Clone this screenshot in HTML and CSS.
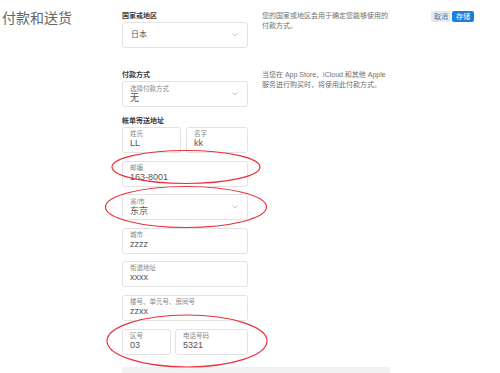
FILE: index.html
```html
<!DOCTYPE html>
<html lang="zh-CN">
<head>
    <meta charset="UTF-8">
    <meta name="viewport" content="width=device-width, initial-scale=1.0">
    <link rel="stylesheet" href="styles.css">
</head>
<body>
<div class="page">
    <h1 class="title">付款和送货</h1>

    <div class="form">
        <div class="section first">
            <div class="fields">
                <label class="group-label">国家或地区</label>
                <div class="box select single">
                    <span class="value big">日本</span>
                    <svg class="chevron" width="6" height="4" viewBox="0 0 6 4"><polyline points="0.5,0.5 3,3 5.5,0.5" fill="none" stroke="#b5b5b5" stroke-width="0.8"/></svg>
                </div>
            </div>
            <p class="note">您的国家或地区会用于确定您能够使用的<br>付款方式。</p>
        </div>

        <div class="section second">
            <div class="fields">
                <label class="group-label">付款方式</label>
                <div class="box select payment">
                    <div>
                        <span class="hint">选择付款方式</span>
                        <span class="value">无</span>
                    </div>
                    <svg class="chevron" width="6" height="4" viewBox="0 0 6 4"><polyline points="0.5,0.5 3,3 5.5,0.5" fill="none" stroke="#b5b5b5" stroke-width="0.8"/></svg>
                </div>
            </div>
            <p class="note">当您在 App Store、iCloud 和其他 Apple<br>服务进行购买时，将使用此付款方式。</p>
        </div>

        <div class="section third">
            <div class="fields">
                <label class="group-label">帐单寄送地址</label>
                <div class="stack">
                    <div class="pair name">
                        <div class="box"><span class="hint">姓氏</span><span class="value">LL</span></div>
                        <div class="box"><span class="hint">名字</span><span class="value">kk</span></div>
                    </div>
                    <div class="box"><span class="hint">邮编</span><span class="value">163-8001</span></div>
                    <div class="box select">
                        <div>
                            <span class="hint">省/市</span>
                            <span class="value">东京</span>
                        </div>
                        <svg class="chevron" width="6" height="4" viewBox="0 0 6 4"><polyline points="0.5,0.5 3,3 5.5,0.5" fill="none" stroke="#b5b5b5" stroke-width="0.8"/></svg>
                    </div>
                    <div class="box"><span class="hint">城市</span><span class="value">zzzz</span></div>
                    <div class="box"><span class="hint">街道地址</span><span class="value">xxxx</span></div>
                    <div class="box"><span class="hint">楼号、单元号、房间号</span><span class="value">zzxx</span></div>
                    <div class="pair phone">
                        <div class="box"><span class="hint">区号</span><span class="value">03</span></div>
                        <div class="box"><span class="hint">电话号码</span><span class="value">5321</span></div>
                    </div>
                </div>
            </div>
        </div>

        <div class="footer-bar"></div>
    </div>

    <div class="actions">
        <button class="btn cancel">取消</button>
        <button class="btn save">存储</button>
    </div>
</div>

<!-- red marks drawn over the form -->
<svg class="marks" width="500" height="373" viewBox="0 0 500 373">
    <ellipse cx="186" cy="167" rx="74" ry="16.5" fill="none" stroke="#e8323c" stroke-width="1.2"/>
    <ellipse cx="186" cy="207" rx="80.5" ry="20.5" fill="none" stroke="#e8323c" stroke-width="1.2"/>
    <ellipse cx="187" cy="341" rx="80" ry="26" fill="none" stroke="#e8323c" stroke-width="1.2"/>
</svg>
</body>
</html>
```

FILE: styles.css
```css
body {
    margin: 0;
    font-family: "Liberation Sans", "Noto Sans CJK SC", sans-serif;
    background-color: #FFFFFF;
    color: #333;
    position: relative;
    height: 373px;
    overflow: hidden;
}

.page {
    display: flex;
    align-items: flex-start;
    padding: 0 26px 0 2px;
}

.title {
    width: 120px;
    flex-shrink: 0;
    margin: 9px 0 0;
    font-size: 14px;
    line-height: 18px;
    font-weight: normal;
    color: #666;
}

.form {
    width: 268px;
    display: flex;
    flex-direction: column;
}

.section {
    display: grid;
    grid-template-columns: 126px 128px;
    column-gap: 14px;
}

.section.first {
    margin-top: 11px;
}

.section.second {
    margin-top: 22px;
}

.section.third {
    margin-top: 9px;
}

.group-label {
    display: block;
    font-size: 7px;
    line-height: 9px;
    font-weight: bold;
    color: #3a3a3a;
    margin-bottom: 2px;
}

.note {
    margin: 0;
    font-size: 7px;
    line-height: 10px;
    color: #707070;
}

.stack {
    display: flex;
    flex-direction: column;
    gap: 7.6px;
}

.pair {
    display: grid;
}

.pair.name {
    grid-template-columns: 59px 1fr;
    column-gap: 5px;
}

.pair.phone {
    grid-template-columns: 49px 1fr;
    column-gap: 4px;
}

.box {
    height: 26px;
    box-sizing: border-box;
    padding: 2px 7px 0;
    border: 1px solid #e3e3e3;
    border-radius: 3px;
    background-color: #fff;
}

.box.select {
    display: flex;
    align-items: center;
    justify-content: space-between;
    padding: 0 7px 0 7px;
}

.box.single {
    padding-left: 8px;
}

.hint {
    display: block;
    font-size: 6.5px;
    line-height: 7px;
    margin-bottom: 1px;
    color: #888;
}

.value {
    display: block;
    font-size: 9px;
    line-height: 10px;
    color: #555;
}

.value.big {
    font-size: 8px;
}

.chevron {
    flex-shrink: 0;
    margin-right: 2px;
}

.footer-bar {
    margin-top: 12px;
    height: 8px;
    background-color: #f1f1f1;
}

.actions {
    margin-left: auto;
    margin-top: 11px;
    display: flex;
    gap: 1px;
}

.btn {
    height: 11px;
    padding: 0 3px;
    border: none;
    border-radius: 2px;
    font-family: inherit;
    font-size: 7px;
    line-height: 11px;
    cursor: pointer;
}

.cancel {
    background-color: #e6e9ed;
    color: #4d77a8;
}

.save {
    padding: 0 4px;
    background-color: #1a80dd;
    color: white;
}

.marks {
    position: absolute;
    top: 0;
    left: 0;
    pointer-events: none;
}
```
